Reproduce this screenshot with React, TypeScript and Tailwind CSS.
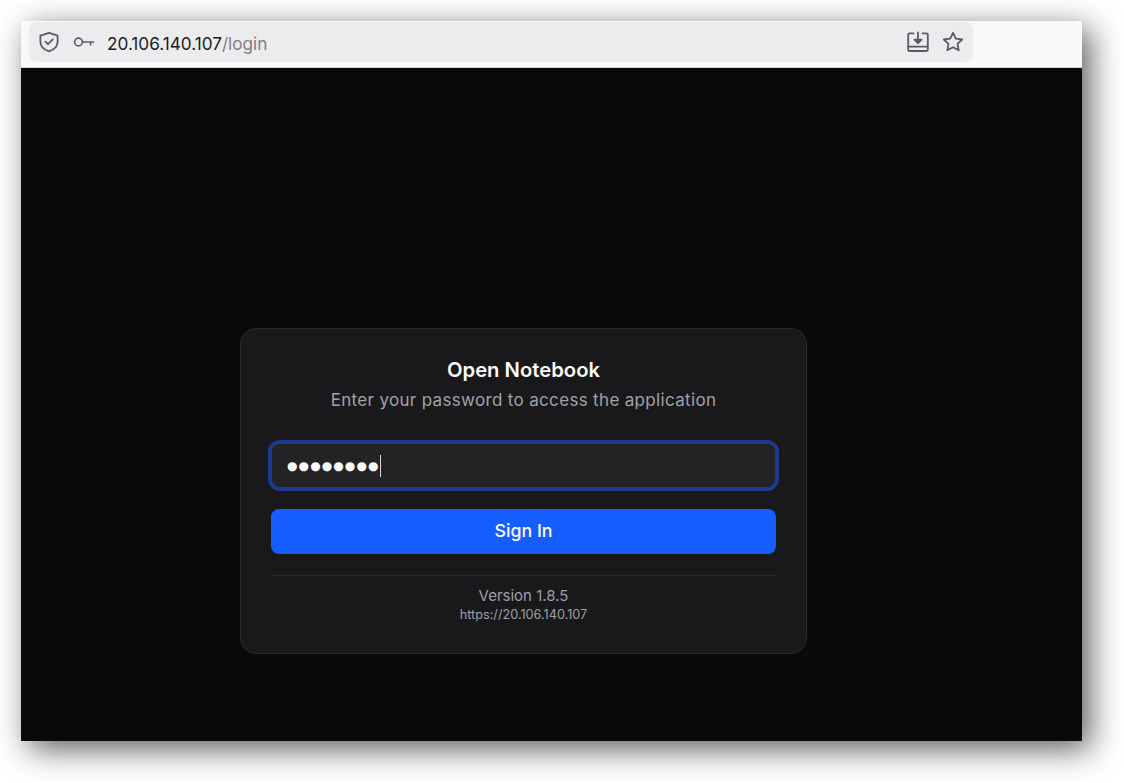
export default function App() {
  return (
    <div className="w-[1124px] h-[783px] bg-white pl-[21px] pt-[21px] overflow-hidden font-['Inter',sans-serif]">
      <div className="w-[1061px] h-[720px] flex flex-col shadow-[8px_8px_30px_rgba(0,0,0,0.64)]">
        <header className="h-[47px] shrink-0 bg-[#f9f9fb] border-b border-[#d4d4d8] pl-2 pt-px">
          <div className="w-[944px] h-[40px] bg-[#ececee] rounded-[8px] flex items-center pl-[9px] pr-[9px]">
            <svg width="22" height="24" viewBox="0 0 22 24" fill="none" stroke="#5b5b66" strokeWidth="1.8" strokeLinejoin="round" strokeLinecap="round">
              <path d="M11 2.8 L19.6 5.6 V12 C19.6 16.6 16 19.6 11 21.4 C6 19.6 2.4 16.6 2.4 12 V5.6 Z" />
              <path d="M7.4 11.6 L10 14.2 L14.8 9.4" />
            </svg>
            <svg className="ml-[13px]" width="22" height="14" viewBox="0 0 22 14" fill="none" stroke="#5b5b66" strokeWidth="1.6" strokeLinecap="round">
              <circle cx="5.5" cy="7" r="3.9" />
              <path d="M9.5 7 H20.6 M17.6 7 V10" />
            </svg>
            <span className="ml-[12px] mt-[3px] text-[17.2px] text-[#1c1b22]">
              20.106.140.107<span className="text-[#7f7f87]">/login</span>
            </span>
            <div className="ml-auto flex items-center gap-[13px]">
              <svg width="22" height="22" viewBox="0 0 22 22" fill="none" stroke="#5b5b66" strokeWidth="1.8" strokeLinecap="round" strokeLinejoin="round">
                <path d="M6.5 2.4 H2.6 A1.4 1.4 0 0 0 1.2 3.8 V18.4 A1.6 1.6 0 0 0 2.8 20 H19.2 A1.6 1.6 0 0 0 20.8 18.4 V3.8 A1.4 1.4 0 0 0 19.4 2.4 H15.5" />
                <path d="M1.4 15.6 H20.6" />
                <path d="M11 1.5 V11.5" />
                <path d="M7.4 8.6 L11 12.2 L14.6 8.6 Z" fill="#5b5b66" />
              </svg>
              <svg width="22" height="22" viewBox="0 0 22 22" fill="none" stroke="#5b5b66" strokeWidth="1.8" strokeLinejoin="round">
                <path d="M11 1.8 L13.8 7.6 L20.2 8.5 L15.5 12.9 L16.7 19.3 L11 16.2 L5.3 19.3 L6.5 12.9 L1.8 8.5 L8.2 7.6 Z" />
              </svg>
            </div>
          </div>
        </header>
        <main className="flex-1 bg-[#09090b] pl-[219px] pt-[260px]">
          <div className="w-[567px] h-[326px] bg-[#19191b] border border-[#2a2a2d] rounded-[16px] px-[30px] pt-[26.5px]">
            <h1 className="text-center text-[20.25px] leading-[28px] font-semibold text-[#fafafa]">Open Notebook</h1>
            <p className="mt-[2.5px] text-center text-[17px] tracking-[0.33px] leading-[28px] text-[#a1a1aa]">Enter your password to access the application</p>
            <div className="mt-[26px] h-[51px] -mx-[3px] rounded-[12px] border-4 border-[#1c3a94]">
              <div className="h-full rounded-[8px] bg-[#232325] flex items-center pl-[15px]">
                <span className="text-[#fafafa] text-[12px] tracking-[1.1px] leading-none font-['DejaVu_Sans',sans-serif]">●●●●●●●●</span>
                <span className="w-px h-[22px] bg-[#d4d4d8]" />
              </div>
            </div>
            <button className="block w-full mt-[18px] h-[45px] rounded-[8px] bg-[#155dfc] text-white text-[17.8px] font-medium text-center">Sign In</button>
            <div className="mt-[21px] border-t border-[#2a2a2d] pt-[10px] text-center">
              <div className="text-[15px] leading-[20px] text-[#9f9fa9]">Version 1.8.5</div>
              <div className="text-[12.7px] leading-[17px] text-[#9f9fa9]">https://20.106.140.107</div>
            </div>
          </div>
        </main>
      </div>
    </div>
  );
}
